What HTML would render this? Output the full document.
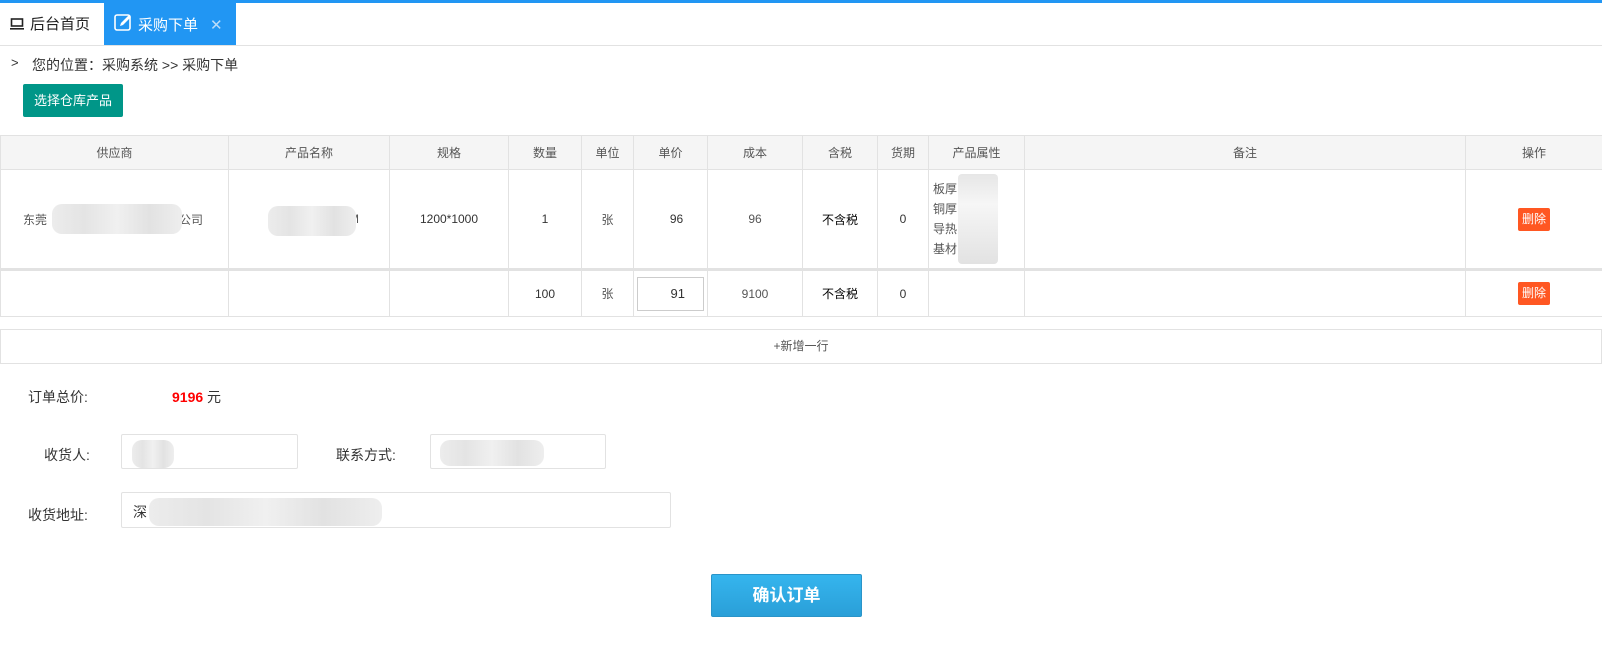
<!DOCTYPE html>
<html><head><meta charset="utf-8"><style>
*{margin:0;padding:0;box-sizing:border-box}
body{width:1602px;height:659px;background:#fff;font-family:"Liberation Sans","Noto Sans CJK SC",sans-serif;font-size:13px;color:#333;position:relative;overflow:hidden}
.a{position:absolute}
.topbar{left:0;top:0;width:1602px;height:3px;background:#2196F3}
.tabs{left:0;top:3px;width:1602px;height:43px;border-bottom:1px solid #e2e2e2}
.tab1{left:10px;top:13px;font-size:15px;color:#222}
.tab2{left:104px;top:3px;width:132px;height:42px;background:#2196F3;color:#fff;font-size:15px;padding:11px 0 0 34px}
table{position:absolute;left:0;top:135px;border-collapse:collapse;width:1602px;table-layout:fixed}
td,th{border:1px solid #e2e2e2;text-align:center;font-size:12px;color:#555;font-weight:normal}
th{background:#f5f5f5;height:34px}
.del{display:inline-block;background:#FF5722;color:#fff;border-radius:2px;padding:4px 4px;font-size:12px;line-height:15px}
.blur{position:absolute;background:linear-gradient(90deg,#ececec,#e4e4e4,#f0f0f0,#e2e2e2,#eeeeee);border-radius:10px}
.inp{border:1px solid #e2e2e2;border-radius:2px;position:absolute;background:#fff}
.lbl{font-size:14px;color:#333}
</style></head><body>
<div class="a topbar"></div>
<div class="a tabs"></div>
<div class="a tab1"><svg width="14" height="12" viewBox="0 0 14 12" style="vertical-align:-1px;margin-right:6px"><rect x="1.5" y="1" width="11" height="7" fill="none" stroke="#222" stroke-width="1.6"/><rect x="0" y="10" width="14" height="1.6" fill="#222"/></svg>后台首页</div>
<div class="a tab2">采购下单<span style="color:#bcdcf8;margin-left:12px;font-size:15px">✕</span></div>
<svg class="a" style="left:114px;top:13px" width="19" height="19" viewBox="0 0 19 19"><rect x="1" y="2" width="15" height="15" rx="2" fill="none" stroke="#fff" stroke-width="1.6"/><path d="M6 13 L7 10 L15 2 L17 4 L9 12 Z" fill="#fff"/></svg>
<div class="a" style="left:11px;top:55px;font-size:13px">&gt;</div>
<div class="a" style="left:32px;top:55px;font-size:14px">您的位置：采购系统 &gt;&gt; 采购下单</div>
<div class="a" style="left:23px;top:84px;width:100px;height:33px;background:#009688;border-radius:2px;color:#fff;font-size:13px;text-align:center;line-height:33px">选择仓库产品</div>
<table>
<colgroup><col style="width:228px"><col style="width:161px"><col style="width:119px"><col style="width:73px"><col style="width:52px"><col style="width:74px"><col style="width:95px"><col style="width:75px"><col style="width:51px"><col style="width:96px"><col style="width:441px"><col style="width:137px"></colgroup>
<tr><th>供应商</th><th>产品名称</th><th>规格</th><th>数量</th><th>单位</th><th>单价</th><th>成本</th><th>含税</th><th>货期</th><th>产品属性</th><th>备注</th><th>操作</th></tr>
<tr style="height:100px;border-bottom:3px solid #e2e2e2"><td style="text-align:left;padding-left:22px">东莞<span style="display:inline-block;width:132px"></span>公司</td><td><span style="margin-left:90px">M</span></td><td style="color:#333">1200*1000</td><td style="color:#333">1</td><td>张</td><td style="color:#333;padding-left:12px">96</td><td>96</td><td style="color:#000">不含税</td><td style="color:#333">0</td><td style="text-align:left;padding-left:4px;line-height:20px">板厚<br>铜厚<br>导热<br>基材:　&nbsp;板</td><td></td><td><span class="del">删除</span></td></tr>
<tr style="height:47px"><td></td><td></td><td></td><td style="color:#333">100</td><td>张</td><td style="padding:0 3px"><div style="border:1px solid #ccc;height:34px;line-height:32px;text-align:right;padding-right:18px;color:#333;font-size:13px">91</div></td><td>9100</td><td style="color:#000">不含税</td><td style="color:#333">0</td><td></td><td></td><td><span class="del">删除</span></td></tr>
</table>
<div class="blur" style="left:52px;top:204px;width:130px;height:30px"></div>
<div class="blur" style="left:268px;top:206px;width:88px;height:30px"></div>
<div class="blur" style="left:958px;top:174px;width:40px;height:90px;border-radius:4px;background:linear-gradient(180deg,#e6e6e6,#f6f6f6,#ececec,#e2e2e2)"></div>
<div class="a" style="left:0;top:329px;width:1602px;height:35px;border:1px solid #e2e2e2;text-align:center;line-height:33px;font-size:12px;color:#555">+新增一行</div>
<div class="a lbl" style="left:28px;top:387px">订单总价:</div>
<div class="a" style="left:172px;top:387px;font-size:14px"><b style="color:#f00">9196</b> 元</div>
<div class="a lbl" style="left:44px;top:445px">收货人:</div>
<div class="inp" style="left:121px;top:434px;width:177px;height:35px"></div>
<div class="blur" style="left:132px;top:440px;width:42px;height:28px"></div>
<div class="a lbl" style="left:336px;top:445px">联系方式:</div>
<div class="inp" style="left:430px;top:434px;width:176px;height:35px"></div>
<div class="blur" style="left:440px;top:440px;width:104px;height:26px"></div>
<div class="a lbl" style="left:28px;top:505px">收货地址:</div>
<div class="inp" style="left:121px;top:492px;width:550px;height:36px"></div>
<div class="a" style="left:133px;top:502px;font-size:14px">深</div>
<div class="blur" style="left:149px;top:498px;width:233px;height:28px"></div>
<div class="a" style="left:711px;top:574px;width:151px;height:43px;background:linear-gradient(#35b5ee,#2a9fd8);border:1px solid #2a94c8;border-radius:2px;color:#fff;font-size:17px;font-weight:bold;text-align:center;line-height:41px">确认订单</div>
</body></html>
